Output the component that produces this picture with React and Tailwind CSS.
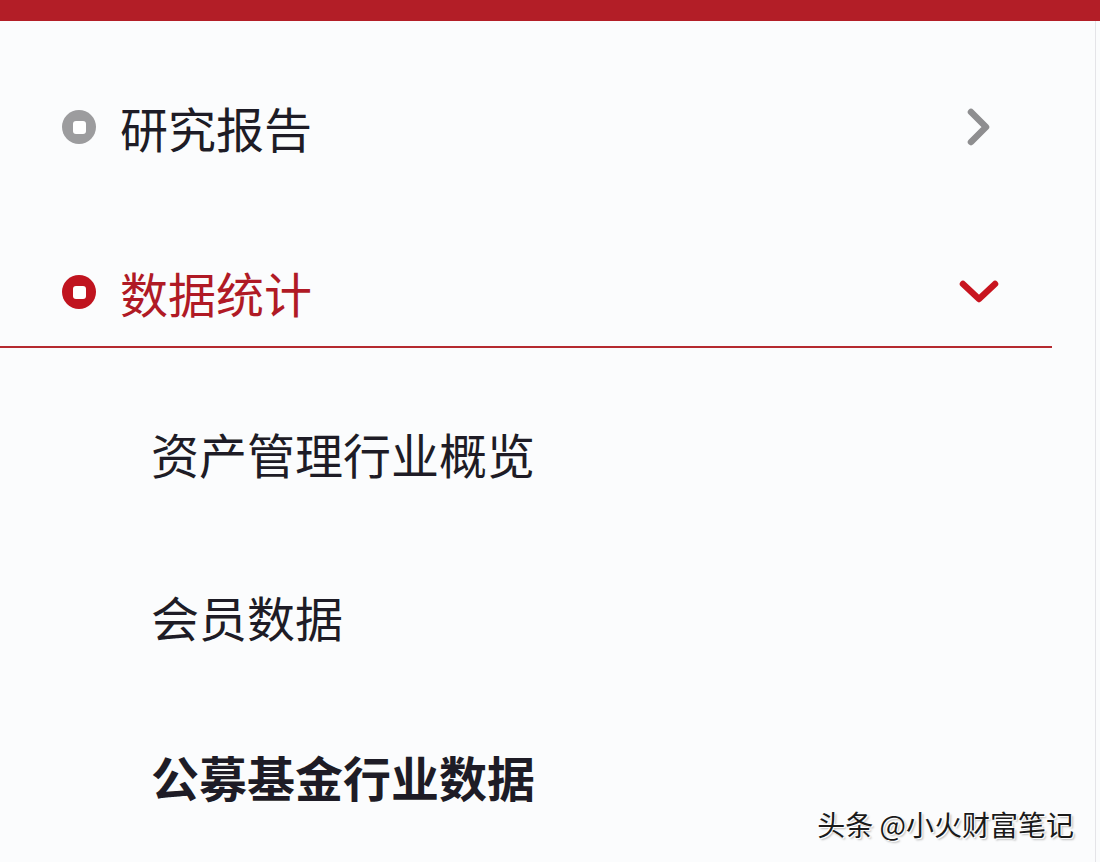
import React from "react";

const font = { fontFamily: '"Noto Sans CJK SC", "Noto Sans", sans-serif' };

function Dot({ active }) {
  return (
    <span
      className={`flex h-[34px] w-[34px] shrink-0 items-center justify-center rounded-full ${
        active ? "bg-[#c0141f]" : "bg-[#9c9c9e]"
      }`}
    >
      <span className="h-[13px] w-[13px] rounded-[3px] bg-white" />
    </span>
  );
}

export default function App() {
  const subItems = [
    { label: "资产管理行业概览", mt: "mt-[55px]" },
    { label: "会员数据", mt: "mt-[63px]" },
    { label: "公募基金行业数据", mt: "mt-[60px]", bold: true },
  ];

  return (
    <div className="relative h-[862px] w-[1100px] overflow-hidden bg-[#fbfcfd]" style={font}>
      <div className="h-[21px] bg-[#b31e27]" />

      <div className="w-[1052px]">
        <div className="mt-[56px] flex h-[100px] items-center pl-[62px] pr-[60px]">
          <Dot />
          <span className="ml-[24px] text-[48px] leading-none text-[#1e1c26]">研究报告</span>
          <svg className="ml-auto h-[40px] w-[26px]" viewBox="0 0 26 40" fill="none">
            <path d="M5 5 L20 20 L5 35" stroke="#8e8e90" strokeWidth="6.5" strokeLinecap="round" strokeLinejoin="round" />
          </svg>
        </div>

        <div className="mt-[65px] flex h-[100px] items-center pl-[62px] pr-[52px]">
          <Dot active />
          <span className="ml-[24px] text-[48px] leading-none text-[#b01a25]">数据统计</span>
          <svg className="ml-auto h-[26px] w-[42px]" viewBox="0 0 42 26" fill="none">
            <path d="M5 5 L21 20 L37 5" stroke="#c8141f" strokeWidth="6.5" strokeLinecap="round" strokeLinejoin="round" />
          </svg>
        </div>
        <div className="mt-[4px] h-[2px] bg-[#b52a30]" />

        {subItems.map((item) => (
          <div key={item.label} className={`${item.mt} flex h-[100px] items-center pl-[151px]`}>
            <span
              className={`text-[48px] leading-none text-[#1e1c26] ${item.bold ? "font-bold" : ""}`}
            >
              {item.label}
            </span>
          </div>
        ))}
      </div>

      <div
        className="absolute bottom-[24px] right-[26px] text-[28px] leading-none text-[#1a1a1a]"
        style={{ textShadow: "1px 1px 0 #fff, -1px -1px 0 #fff, 2px 2px 2px rgba(0,0,0,0.25)" }}
      >
        头条 @小火财富笔记
      </div>
      <div className="absolute right-[4px] top-[21px] h-[841px] w-px bg-[#e4e4e8]" />
    </div>
  );
}
